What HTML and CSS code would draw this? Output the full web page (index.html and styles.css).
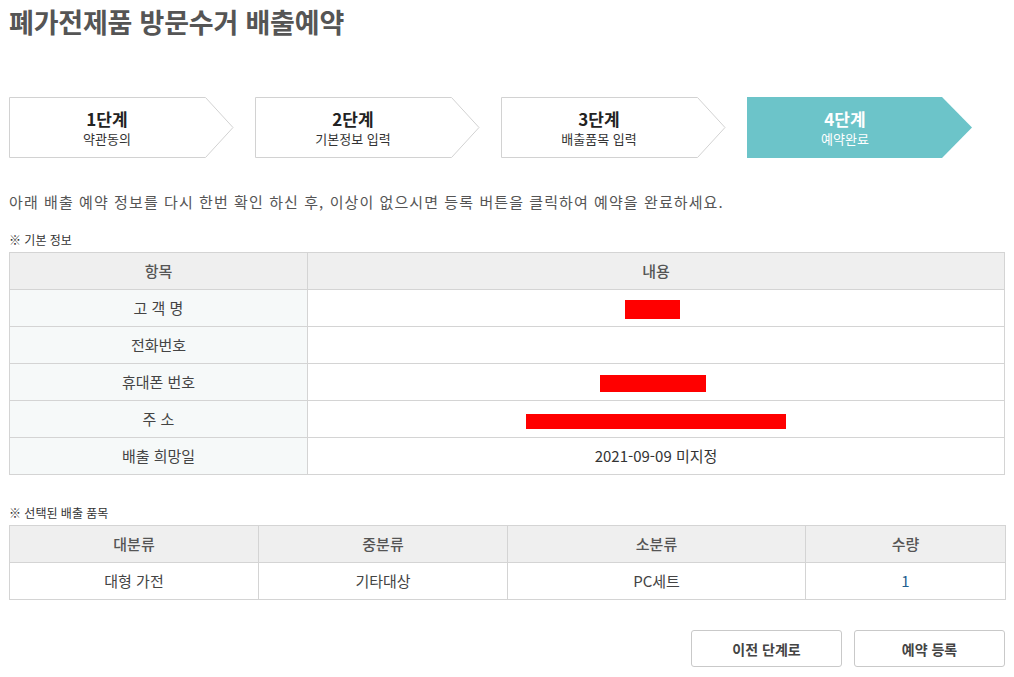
FILE: index.html
```html
<!DOCTYPE html>
<html lang="ko">
<head>
<meta charset="utf-8">
<title>폐가전제품 방문수거 배출예약</title>
<link rel="stylesheet" href="styles.css">
</head>
<body>
<div class="page">
  <h1 class="title">폐가전제품 방문수거 배출예약</h1>

  <ol class="steps">
    <li class="step">
      <svg class="step-shape" width="225" height="61" viewBox="0 0 225 61"><polygon points="0.5,0.5 196.5,0.5 224,30.5 196.5,60.5 0.5,60.5" fill="#fff" stroke="#d2d2d2"/></svg>
      <div class="step-text"><strong>1단계</strong><span>약관동의</span></div>
    </li>
    <li class="step">
      <svg class="step-shape" width="225" height="61" viewBox="0 0 225 61"><polygon points="0.5,0.5 196.5,0.5 224,30.5 196.5,60.5 0.5,60.5" fill="#fff" stroke="#d2d2d2"/></svg>
      <div class="step-text"><strong>2단계</strong><span>기본정보 입력</span></div>
    </li>
    <li class="step">
      <svg class="step-shape" width="225" height="61" viewBox="0 0 225 61"><polygon points="0.5,0.5 196.5,0.5 224,30.5 196.5,60.5 0.5,60.5" fill="#fff" stroke="#d2d2d2"/></svg>
      <div class="step-text"><strong>3단계</strong><span>배출품목 입력</span></div>
    </li>
    <li class="step step-active">
      <svg class="step-shape" width="225" height="61" viewBox="0 0 225 61"><polygon points="0,0 195,0 225,30.5 195,61 0,61" fill="#6cc4c9"/></svg>
      <div class="step-text"><strong>4단계</strong><span>예약완료</span></div>
    </li>
  </ol>

  <p class="desc">아래 배출 예약 정보를 다시 한번 확인 하신 후, 이상이 없으시면 등록 버튼을 클릭하여 예약을 완료하세요.</p>

  <h2 class="section-label">※ 기본 정보</h2>
  <table class="info-table">
    <colgroup><col class="col-key"><col></colgroup>
    <thead>
      <tr><th>항목</th><th>내용</th></tr>
    </thead>
    <tbody>
      <tr><th>고 객 명</th><td><span class="redact redact-name"></span></td></tr>
      <tr><th>전화번호</th><td></td></tr>
      <tr><th>휴대폰 번호</th><td><span class="redact redact-phone"></span></td></tr>
      <tr><th>주 소</th><td><span class="redact redact-addr"></span></td></tr>
      <tr><th>배출 희망일</th><td>2021-09-09 미지정</td></tr>
    </tbody>
  </table>

  <h2 class="section-label section-label-2">※ 선택된 배출 품목</h2>
  <table class="item-table">
    <colgroup><col class="c1"><col class="c2"><col class="c3"><col class="c4"></colgroup>
    <thead>
      <tr><th>대분류</th><th>중분류</th><th>소분류</th><th>수량</th></tr>
    </thead>
    <tbody>
      <tr><td>대형 가전</td><td>기타대상</td><td>PC세트</td><td class="qty">1</td></tr>
    </tbody>
  </table>

  <div class="actions">
    <button class="btn" type="button">이전 단계로</button>
    <button class="btn" type="button">예약 등록</button>
  </div>
</div>
</body>
</html>
```

FILE: styles.css
```css
* { box-sizing: border-box; }
html, body { margin: 0; padding: 0; background: #fff; }
body {
  font-family: "Noto Sans CJK KR", "Noto Sans", "Liberation Sans", sans-serif;
  color: #555;
}
.page {
  width: 1014px;
  padding: 0 9px 0 9px;
}
.title {
  margin: 0;
  padding-top: 4px;
  font-size: 27px;
  line-height: 36px;
  font-weight: 700;
  color: #555;
  letter-spacing: -0.2px;
}
.steps {
  list-style: none;
  margin: 57px 0 0 0;
  padding: 0;
  display: flex;
  gap: 21px;
}
.step {
  position: relative;
  width: 225px;
  height: 61px;
}
.step-shape {
  position: absolute;
  left: 0;
  top: 0;
  display: block;
}
.step-text {
  position: relative;
  width: 196px;
  height: 61px;
  display: flex;
  flex-direction: column;
  align-items: center;
  justify-content: center;
}
.step-text strong {
  font-size: 17px;
  line-height: 22px;
  font-weight: 700;
  color: #222;
}
.step-text span {
  font-size: 13px;
  line-height: 18px;
  color: #333;
}
.step-active .step-text strong,
.step-active .step-text span { color: #fff; }

.desc {
  margin: 33px 0 0 0;
  font-size: 15px;
  line-height: 22px;
  color: #555;
  letter-spacing: 1.08px;
}
.section-label {
  margin: 18px 0 0 0;
  font-size: 12px;
  line-height: 18px;
  font-weight: 400;
  color: #333;
}
.section-label-2 { margin-top: 29px; }

table {
  width: 996px;
  border-collapse: collapse;
  table-layout: fixed;
  margin-top: 3px;
}
th, td {
  border: 1px solid #d4d4d4;
  height: 37px;
  padding: 0 8px;
  text-align: center;
  font-size: 15px;
  font-weight: 400;
  line-height: 20px;
  color: #444;
}
thead th {
  background: #efefef;
  color: #555;
  font-weight: 500;
}
.info-table .col-key { width: 298px; }
.info-table tbody th {
  background: #f6f9f9;
  color: #444;
}
.info-table td { color: #333; }
.redact {
  display: inline-block;
  background: #ff0000;
  vertical-align: middle;
}
.redact-name { width: 55px; height: 19px; margin-left: -7px; }
.redact-phone { width: 106px; height: 17px; margin-left: -6px; }
.redact-addr { width: 260px; height: 15px; margin-top: 3px; }

.item-table .c1 { width: 249px; }
.item-table .c2 { width: 249px; }
.item-table .c3 { width: 298px; }
.item-table .c4 { width: 200px; }
.item-table td { color: #444; }
.item-table td.qty { color: #1f5f8f; }

.actions {
  margin-top: 30px;
  display: flex;
  justify-content: flex-end;
  gap: 12px;
}
.btn {
  width: 151px;
  height: 37px;
  background: #fff;
  border: 1px solid #c9c9c9;
  border-radius: 3px;
  font-family: inherit;
  font-size: 14px;
  font-weight: 700;
  color: #444;
  padding: 0;
}
```
